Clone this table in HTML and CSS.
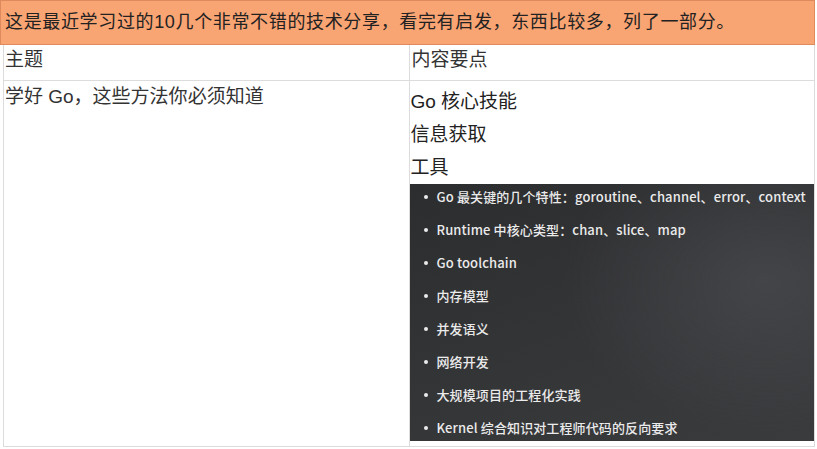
FILE: index.html
```html
<!DOCTYPE html>
<html lang="zh-CN">
<head>
<meta charset="utf-8">
<title>技术分享</title>
<link rel="stylesheet" href="styles.css">
</head>
<body>
<div class="page">
  <div class="banner">这是最近学习过的10几个非常不错的技术分享，看完有启发，东西比较多，列了一部分。</div>
  <table class="grid">
    <tr class="head-row">
      <td class="cell">主题</td>
      <td class="cell cell-right"><span class="head-label">内容要点</span></td>
    </tr>
    <tr class="body-row">
      <td class="cell topic">学好 Go，这些方法你必须知道</td>
      <td class="cell cell-right points">
        <p class="point">Go 核心技能</p>
        <p class="point">信息获取</p>
        <p class="point">工具</p>
        <div class="slide">
          <ul class="slide-list">
            <li>Go 最关键的几个特性：goroutine、channel、error、context</li>
            <li>Runtime 中核心类型：chan、slice、map</li>
            <li>Go toolchain</li>
            <li>内存模型</li>
            <li>并发语义</li>
            <li>网络开发</li>
            <li>大规模项目的工程化实践</li>
            <li>Kernel 综合知识对工程师代码的反向要求</li>
          </ul>
        </div>
      </td>
    </tr>
  </table>
</div>
</body>
</html>
```

FILE: styles.css
```css
html, body {
  margin: 0;
  padding: 0;
  background: #fff;
}

.page {
  width: 817px;
  font-family: "Liberation Sans", "Noto Sans CJK SC", sans-serif;
  color: #333;
}

.banner {
  box-sizing: border-box;
  width: 815px;
  height: 45px;
  background: #f9a473;
  border: 1px solid #df8a5c;
  font-size: 18px;
  letter-spacing: 0.65px;
  line-height: 42px;
  padding-left: 4px;
  color: #222;
  white-space: nowrap;
}

.grid {
  margin-left: 3px;
  border-collapse: collapse;
  table-layout: fixed;
  width: 812px;
}

.cell {
  border: 1px solid #dcdcdc;
  vertical-align: top;
  padding: 0 0 0 1px;
  font-size: 19px;
  line-height: 24px;
  width: 404px;
}

.head-row .cell {
  border-top: none;
  height: 35px;
  padding-top: 3px;
  box-sizing: border-box;
}

.cell-right {
  padding-left: 0;
}

.head-label {
  padding-left: 2px;
}

.topic {
  padding-top: 4px;
}

.points {
  padding-top: 4px;
  padding-bottom: 5px;
  padding-right: 0;
}

.point {
  margin: 0;
  padding-left: 1px;
  line-height: 33px;
  color: #222;
}

.slide {
  height: 257px;
  background:
    radial-gradient(ellipse 200px 150px at 88% 38%, rgba(82, 84, 88, 0.5), rgba(82, 84, 88, 0) 100%),
    linear-gradient(160deg, #2c2d2f 0%, #343537 55%, #3a3b3d 100%);
  overflow: hidden;
}

.slide-list {
  list-style: none;
  margin: 0;
  padding: 0;
  font-family: "Noto Sans CJK SC", sans-serif;
  font-size: 13px;
  font-weight: 500;
  letter-spacing: 0.12px;
  color: #ebebeb;
  white-space: nowrap;
}

.slide-list li {
  position: relative;
  line-height: 26px;
  height: 26px;
  margin-bottom: 7px;
  padding-left: 27px;
}

.slide-list li::before {
  content: "";
  position: absolute;
  left: 14px;
  top: 11px;
  width: 4px;
  height: 4px;
  border-radius: 50%;
  background: #ebebeb;
}
```
